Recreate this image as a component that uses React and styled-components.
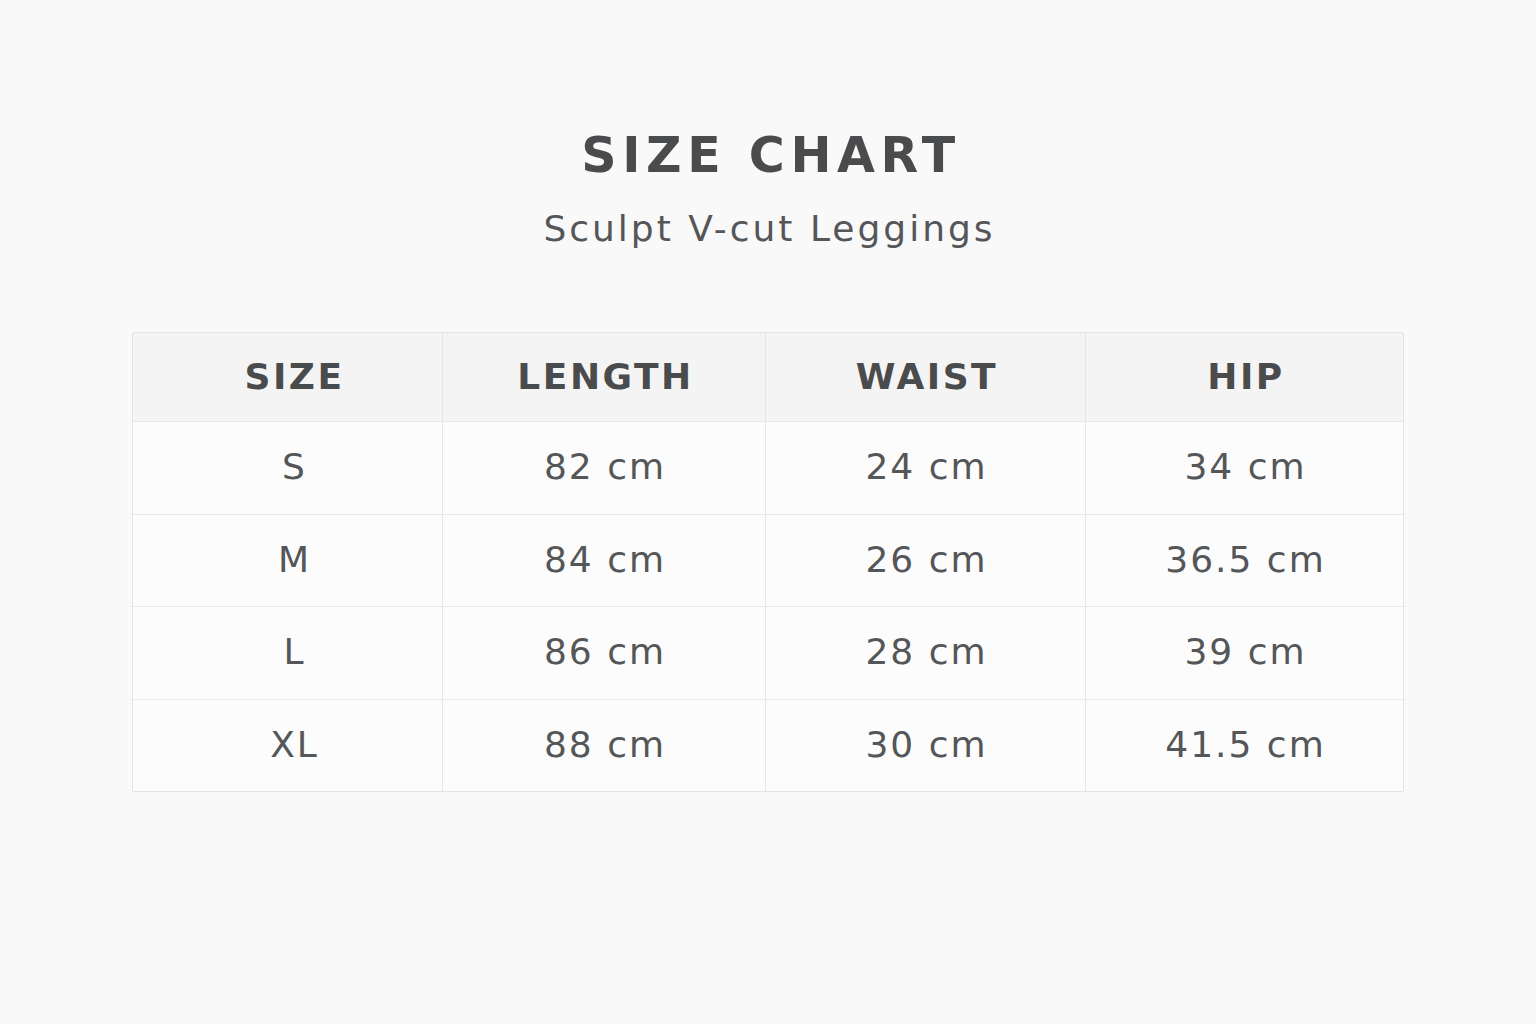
import React from "react";
import styled, { createGlobalStyle } from "styled-components";

const Global = createGlobalStyle`
  html, body { margin: 0; padding: 0; background: #f9f9f9; }
  body { font-family: "DejaVu Sans", "Open Sans", sans-serif; }
`;

const Page = styled.div`
  width: 1536px;
  height: 1024px;
  box-sizing: border-box;
  padding-top: 126px;
  display: flex;
  flex-direction: column;
  align-items: center;
  background: #f9f9f9;
`;

const Title = styled.h1`
  margin: 0;
  padding-left: 6px;
  font-size: 49px;
  line-height: 60px;
  font-weight: 700;
  letter-spacing: 5.6px;
  color: #4a4b4d;
`;

const Subtitle = styled.div`
  margin-top: 20px;
  padding-left: 3px;
  font-size: 36px;
  line-height: 46px;
  font-weight: 400;
  letter-spacing: 3px;
  color: #555658;
`;

const Table = styled.div`
  margin-top: 80px;
  display: grid;
  grid-template-columns: 309px 323px 320px 318px;
  border: 1px solid #e4e4e4;
  border-radius: 2px;
  background: #fcfcfc;
`;

const Cell = styled.div`
  height: ${(p) => (p.$head ? "88px" : "92.5px")};
  display: flex;
  align-items: center;
  justify-content: center;
  box-sizing: border-box;
  padding-bottom: 2px;
  padding-left: ${(p) => (p.$first ? "14px" : p.$head ? "3px" : "2px")};
  border-left: ${(p) => (p.$first ? "none" : "1px solid #e6e6e6")};
  border-top: ${(p) => (p.$top ? "none" : "1px solid #e8e8e8")};
  background: ${(p) => (p.$head ? "#f4f4f4" : "#fcfcfc")};
  font-size: 36px;
  font-weight: ${(p) => (p.$head ? 700 : 400)};
  letter-spacing: ${(p) => (p.$head ? "2.5px" : "2px")};
  color: ${(p) => (p.$head ? "#4a4b4d" : "#555658")};
`;

const heads = ["SIZE", "LENGTH", "WAIST", "HIP"];
const rows = [
  ["S", "82 cm", "24 cm", "34 cm"],
  ["M", "84 cm", "26 cm", "36.5 cm"],
  ["L", "86 cm", "28 cm", "39 cm"],
  ["XL", "88 cm", "30 cm", "41.5 cm"],
];

export default function App() {
  return (
    <>
      <Global />
      <Page>
        <Title>SIZE CHART</Title>
        <Subtitle>Sculpt V-cut Leggings</Subtitle>
        <Table>
          {heads.map((h, i) => (
            <Cell key={h} $head $top $first={i === 0}>
              {h}
            </Cell>
          ))}
          {rows.map((r) =>
            r.map((v, i) => (
              <Cell key={r[0] + i} $first={i === 0}>
                {v}
              </Cell>
            ))
          )}
        </Table>
      </Page>
    </>
  );
}
